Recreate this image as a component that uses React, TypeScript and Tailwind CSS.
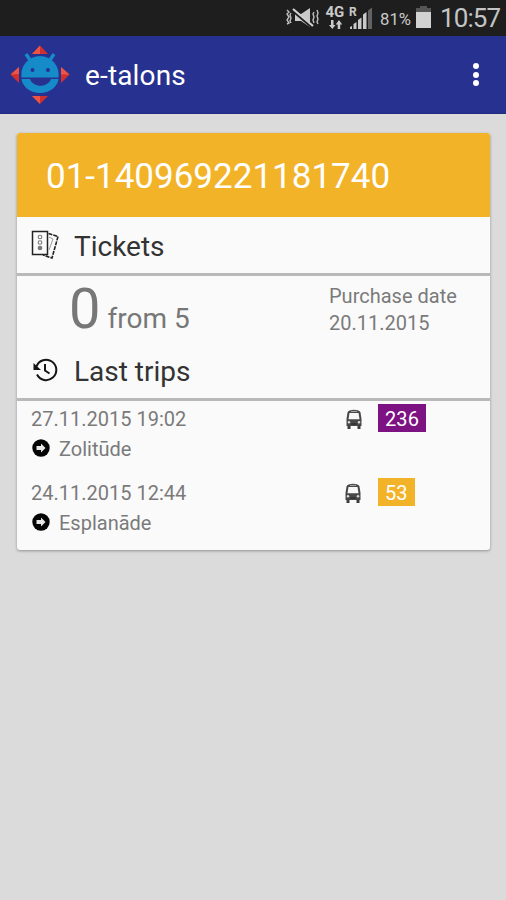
import React from "react";

function StatusBar() {
  return (
    <div className="flex h-9 items-center bg-[#1e1e1e] text-[#c4c4c4]">
      <svg className="ml-[285px] h-7 w-[136px] shrink-0" viewBox="285 4 136 28" fill="#c9c9c9">
        <g fill="none" stroke="#bdbdbd" strokeWidth="1.4">
          <path d="M287 10l2 2-2 2 2 3-2 3 2 3-2 1M291 13l-1 2 1 3-1 3 1 2M314 12l-1 2 1 3-1 3 1 3M317 10l1 3-1 3 1 3-1 3 1 2" />
        </g>
        <path d="M295 14h6l9-6v19l-9-6h-6z" />
        <path d="M293 11l20 17" stroke="#1e1e1e" strokeWidth="2.500" />
        <path d="M293 9l20 17" stroke="#d0d0d0" strokeWidth="2.200" />
        <text x="325.500" y="17" fontFamily="Roboto, sans-serif" fontSize="15" fontWeight="700">4G</text>
        <text x="349" y="16" fontFamily="Roboto, sans-serif" fontSize="12" fontWeight="700">R</text>
        <path d="M331 20h2.500v5h2l-3.200 4-3.300-4h2zM337.700 29h2.500v-4.500h2l-3.200-4.500-3.300 4.500h2z" />
        <path d="M350 29v-2l2-1v3zM353.500 29v-5l3-2v7zM358 29v-9l3.500-2.500V29zM363 29V14.500l3.500-2.500v17z" />
        <path d="M368 29V10.500l4-3V29z" fill="#626262" />
        <text x="380" y="24.500" fontFamily="Roboto, sans-serif" fontSize="16.500" textLength="31" lengthAdjust="spacingAndGlyphs">81%</text>
      </svg>
      <svg className="-ml-[6px] h-7 w-[18px] shrink-0" viewBox="415 4 18 28">
        <path d="M420 6h7v2h4v20h-15V8h4z" fill="#555" />
        <path d="M416 12h15v16h-15z" fill="#d2d2d2" />
      </svg>
      <span className="ml-[7px] text-[26px] leading-9 tracking-[-0.9px]">10:57</span>
    </div>
  );
}

function Logo() {
  return (
    <svg className="ml-[10px] h-[60px] w-[60px]" viewBox="10 45 60 60">
      <g fill="#d02f2f">
        <path d="M40 45.500L48 54H32zM40 104L48 96H32zM10.500 74.500L19 67v16zM69.500 74.500L61 67v16z" />
      </g>
      <g fill="#ea5545">
        <path d="M40 45.500V54h-8zM32 96h8v8zM10.500 74.500L19 67v7zM61 67v7.500h8.500z" />
      </g>
      <path d="M26 54l4 6M54 54l-4 6" stroke="#168bc9" strokeWidth="3.400" />
      <path d="M21.500 77.500a18.700 18.700 0 1 1 37 0z" fill="#168bc9" />
      <path d="M21.500 79h8.500c3 9 18 9 21 0h7.500a18.600 15.500 0 0 1-37 0z" fill="#168bc9" />
      <circle cx="32.500" cy="70" r="2" fill="#27318f" />
      <circle cx="48" cy="70" r="2" fill="#27318f" />
    </svg>
  );
}

function TicketsIcon() {
  return (
    <svg className="h-[30px] w-[30px]" viewBox="30 230 30 30" fill="none" stroke="#222">
      <path d="M32.500 231.500h15v23h-15z" strokeWidth="1.500" />
      <path d="M48.500 233.500l9.500 3-6 21.500-9-3" strokeWidth="1.600" strokeDasharray="4 1" />
      <path d="M49 237l4 2-4 11" stroke="#999" strokeWidth="1" />
      <g stroke="#777" strokeWidth="1.100">
        <circle cx="40" cy="237" r="1.800" />
        <circle cx="40" cy="242.500" r="1.800" />
        <circle cx="40" cy="248" r="1.800" fill="#777" />
      </g>
    </svg>
  );
}

function HistoryIcon() {
  return (
    <svg className="h-[30px] w-[30px]" viewBox="30 355 30 30" fill="none" stroke="#151515" strokeWidth="2">
      <path d="M36.500 366.500a10.200 10.200 0 1 1 .5 8" />
      <path d="M33.500 363v7h7.500z" fill="#151515" stroke="none" />
      <path d="M45 364v6.500l4.500 3" />
    </svg>
  );
}

function BusIcon() {
  return (
    <svg className="h-5 w-[18px]" viewBox="0 0 18 20">
      <path d="M2.500 3.500Q3.500 .8 9 .8t6.500 2.700L16.500 10v7h-15v-7z" fill="#484848" />
      <path d="M4.500 4h9l1 6.200h-11z" fill="#f7f7f7" />
      <path d="M6 2.400h6" stroke="#c5c5c5" strokeWidth=".8" />
      <path d="M2.500 16.500h3V20h-3zM12.500 16.500h3V20h-3z" fill="#3c3c3c" />
      <circle cx="4" cy="13.300" r="1.200" fill="#ddd" />
      <circle cx="14" cy="13.300" r="1.200" fill="#ddd" />
      <path d="M6.500 15h5" stroke="#222" />
    </svg>
  );
}

function Trip({ date, stop, route, color, busMargin }: { date: string; stop: string; route: string; color: string; busMargin: string }) {
  return (
    <div className="h-[74px] pt-[3px]">
      <div className="flex h-7 items-center">
        <span className="w-[312px] pl-[14px] pt-px text-[20px] leading-7 text-[#7a7a7a]">{date}</span>
        <span className={`flex w-[49px] pt-[2px] ${busMargin}`}><BusIcon /></span>
        <span className={`h-7 px-[7px] pt-px text-[20px] leading-7 tracking-[0.1px] text-white ${color}`}>{route}</span>
      </div>
      <div className="mt-[2px] flex h-7 items-center">
        <svg className="ml-[15px] h-[18px] w-[18px]" viewBox="0 0 18 18">
          <circle cx="9" cy="9" r="8.700" fill="#050505" />
          <path d="M4.500 7H9V4.500L13.500 9 9 13.500V11H4.500z" fill="#e8e8e8" />
        </svg>
        <span className="ml-[9px] pt-px text-[20px] leading-7 text-[#7a7a7a]">{stop}</span>
      </div>
    </div>
  );
}

export default function App() {
  return (
    <div className="h-[900px] w-[506px] overflow-hidden bg-[#dbdbdb] font-['Roboto',sans-serif]">
      <StatusBar />
      <header className="flex h-[78px] items-center border-b border-[#222b80] bg-[#27318f]">
        <Logo />
        <h1 className="ml-[15px] pt-[3px] text-[28px] leading-9 tracking-[0.15px] text-white">e-talons</h1>
        <div className="ml-auto mr-[27px] flex flex-col gap-[2.500px]">
          <i className="h-[6px] w-[6px] rounded-full bg-white" />
          <i className="h-[6px] w-[6px] rounded-full bg-white" />
          <i className="h-[6px] w-[6px] rounded-full bg-white" />
        </div>
      </header>
      <main className="ml-[17px] mt-[19px] h-[417px] w-[473px] overflow-hidden rounded-[3px] bg-[#fafafa] shadow-[0_1px_3px_rgba(0,0,0,0.35)]">
        <div className="flex h-[84px] items-center bg-[#f3b328] pl-[29px] pt-[5px] text-[35px] text-white">01-140969221181740</div>
        <div className="flex h-[59px] items-center border-b-[3px] border-[#b9b9b9] pl-[13px]">
          <TicketsIcon />
          <h2 className="ml-[14px] pt-[4px] text-[28px] leading-9 text-[#333]">Tickets</h2>
        </div>
        <div className="flex h-[66px]">
          <div className="flex w-[312px] items-baseline pl-[52px] text-[#777]">
            <span className="text-[56px] leading-[66px] tracking-[-1px]">0</span>
            <span className="ml-[8px] text-[28px]">from 5</span>
          </div>
          <div className="pt-[7px] text-[20px] leading-[27px] text-[#7a7a7a]">
            <div>Purchase date</div>
            <div>20.11.2015</div>
          </div>
        </div>
        <div className="flex h-[59px] items-center border-b-[3px] border-[#b9b9b9] pl-[13px]">
          <HistoryIcon />
          <h2 className="ml-[14px] pt-[4px] text-[28px] leading-9 text-[#333]">Last trips</h2>
        </div>
        <Trip date="27.11.2015 19:02" stop="Zolitūde" route="236" color="bg-[#7d1282]" busMargin="pl-[16px]" />
        <Trip date="24.11.2015 12:44" stop="Esplanāde" route="53" color="bg-[#f3b328]" busMargin="pl-[15px]" />
      </main>
    </div>
  );
}
